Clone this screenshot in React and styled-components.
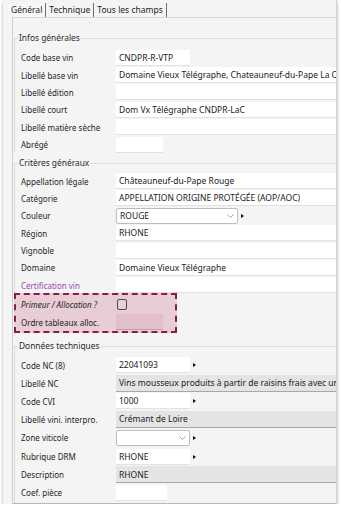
import React from 'react';
import styled, { createGlobalStyle } from 'styled-components';

const GlobalStyle = createGlobalStyle`
  html, body {
    margin: 0;
    padding: 0;
    background: #ffffff;
  }
  body {
    font-family: "Noto Sans", "Open Sans", sans-serif;
    font-size: 8px;
    color: #1e1e1e;
  }
`;

const Window = styled.div`
  margin-left: 3px;
  width: 334px;
  height: 504px;
  padding-left: 9px;
  box-sizing: border-box;
  background: #f4f4f4;
  border-right: 1px solid #d6d6d6;
  box-shadow: 0 2px 3px rgba(0, 0, 0, 0.35);
  overflow: hidden;
  display: flex;
  flex-direction: column;
`;

const TabBar = styled.div`
  display: flex;
  margin: 3px 0 0 -4px;
  height: 14px;
`;

const Tab = styled.div`
  display: flex;
  align-items: center;
  padding: 0 3px;
  line-height: 14px;
  font-size: 8.5px;
  color: #1e1e1e;
  border-right: 1px solid #6e6e6e;
  background: ${(p) => (p.$active ? '#f7f7f7' : '#f4f4f4')};
`;

const Panel = styled.div`
  flex: 1;
  width: 360px;
  border-top: 1px solid #dadada;
  border-left: 1px solid #cfcfcf;
  border-bottom: 1px solid #b8b8b8;
  padding-left: 1px;
  display: flex;
  flex-direction: column;
`;

const Group = styled.fieldset`
  margin: ${(p) => p.$mt}px 0 0 0;
  padding: ${(p) => p.$pt}px 0 0 0;
  border: 0;
  border-top: 1px solid #dcdcdc;
  border-left: 1px solid #dcdcdc;
  flex: ${(p) => (p.$grow ? 1 : 'none')};
  min-width: 0;
`;

const Legend = styled.legend`
  margin-left: 3px;
  padding: 0 1px;
  line-height: 12px;
  font-size: 8.4px;
  color: #2a2a2a;
`;

const Row = styled.div`
  display: grid;
  grid-template-columns: 95px auto;
  align-items: center;
  height: ${(p) => p.$h || 17.4}px;
  padding-left: 6px;
`;

const Label = styled.span`
  white-space: nowrap;
  font-style: ${(p) => (p.$italic ? 'italic' : 'normal')};
  color: ${(p) => p.$color || '#1e1e1e'};
`;

const FieldWrap = styled.div`
  display: flex;
  align-items: center;
  gap: 3px;
`;

const fieldBg = {
  plain: '#ffffff',
  readonly: '#e4e4e4',
  pink: '#e1bfcb',
  select: '#ffffff',
};

const fieldLine = {
  plain: '#e2e2e2',
  readonly: '#a8a8a8',
  pink: '#c29dab',
  select: '#bdbdbd',
};

const Field = styled.div`
  box-sizing: border-box;
  width: ${(p) => p.$w}px;
  height: ${(p) => (p.$kind === 'readonly' ? 17 : 16)}px;
  padding: 0 3px;
  display: flex;
  align-items: center;
  justify-content: space-between;
  white-space: nowrap;
  overflow: hidden;
  font-size: 8.5px;
  background: ${(p) => fieldBg[p.$kind]};
  border: ${(p) => (p.$kind === 'select' ? '1px solid #bdbdbd' : '0')};
  border-radius: ${(p) => (p.$kind === 'select' ? 2 : 0)}px;
  border-bottom: 1px solid ${(p) => fieldLine[p.$kind]};
  color: #1a1a1a;
`;

const Arrow = styled.span`
  width: 0;
  height: 0;
  border-top: 2.5px solid transparent;
  border-bottom: 2.5px solid transparent;
  border-left: 3px solid #111;
`;

const Check = styled.span`
  box-sizing: border-box;
  width: 10px;
  height: 11px;
  margin-left: 1px;
  border: 1px solid #4a4a4a;
  border-radius: 2px;
  background: #e9cfd8;
`;

const AllocBox = styled.div`
  box-sizing: border-box;
  width: 163px;
  height: 40px;
  margin: -1px 0 0 -1px;
  padding-top: 1px;
  border: 2px dashed #8a1a46;
  background: #e8cdd6;
  & > div {
    padding-left: 5px;
  }
`;

const Chevron = () => (
  <svg width="7" height="4" viewBox="0 0 7 4">
    <polyline points="0.5,0.5 3.5,3.5 6.5,0.5" fill="none" stroke="#8a8a8a" strokeWidth="0.8" />
  </svg>
);

const F = ({ w = 240, kind = 'plain', arrow, children }) => (
  <FieldWrap>
    <Field $w={w} $kind={kind}>
      <span>{children}</span>
      {kind === 'select' && <Chevron />}
    </Field>
    {arrow && <Arrow />}
  </FieldWrap>
);

const R = ({ label, h, italic, color, children }) => (
  <Row $h={h}>
    <Label $italic={italic} $color={color}>
      {label}
    </Label>
    {children}
  </Row>
);

export default function App() {
  return (
    <>
      <GlobalStyle />
      <Window>
        <TabBar>
          <Tab $active>Général</Tab>
          <Tab>Technique</Tab>
          <Tab>Tous les champs</Tab>
        </TabBar>
        <Panel>
          <Group $mt={14} $pt={5}>
            <Legend>Infos générales</Legend>
            <R label="Code base vin">
              <F w={74}>CNDPR-R-VTP</F>
            </R>
            <R label="Libellé base vin">
              <F>Domaine Vieux Télégraphe, Chateauneuf-du-Pape La Crau</F>
            </R>
            <R label="Libellé édition">
              <F />
            </R>
            <R label="Libellé court">
              <F>Dom Vx Télégraphe CNDPR-LaC</F>
            </R>
            <R label="Libellé matière sèche">
              <F />
            </R>
            <R label="Abrégé">
              <F w={47} />
            </R>
          </Group>
          <Group $mt={4} $pt={3}>
            <Legend>Critères généraux</Legend>
            <R label="Appellation légale">
              <F>Châteauneuf-du-Pape Rouge</F>
            </R>
            <R label="Catégorie">
              <F>APPELLATION ORIGINE PROTÉGÉE (AOP/AOC)</F>
            </R>
            <R label="Couleur">
              <F w={122} kind="select" arrow>
                ROUGE
              </F>
            </R>
            <R label="Région">
              <F>RHONE</F>
            </R>
            <R label="Vignoble">
              <F />
            </R>
            <R label="Domaine">
              <F>Domaine Vieux Télégraphe</F>
            </R>
            <R label="Certification vin" color="#9a45b8">
              <F />
            </R>
            <AllocBox>
              <R label="Primeur / Allocation ?" h={17} italic>
                <Check />
              </R>
              <R label="Ordre tableaux alloc." h={18}>
                <F w={47} kind="pink" />
              </R>
            </AllocBox>
          </Group>
          <Group $mt={7} $pt={4} $grow>
            <Legend>Données techniques</Legend>
            <R label="Code NC (8)" h={18}>
              <F w={74} arrow>
                22041093
              </F>
            </R>
            <R label="Libellé NC" h={18}>
              <F kind="readonly">Vins mousseux produits à partir de raisins frais avec une</F>
            </R>
            <R label="Code CVI" h={18}>
              <F w={74} arrow>
                1000
              </F>
            </R>
            <R label="Libellé vini. interpro." h={18}>
              <F kind="readonly">Crémant de Loire</F>
            </R>
            <R label="Zone viticole" h={19}>
              <F w={74} kind="select" arrow />
            </R>
            <R label="Rubrique DRM" h={19}>
              <F w={74} arrow>
                RHONE
              </F>
            </R>
            <R label="Description" h={17.5}>
              <F kind="readonly">RHONE</F>
            </R>
            <R label="Coef. pièce" h={18}>
              <F w={51} />
            </R>
          </Group>
        </Panel>
      </Window>
    </>
  );
}
